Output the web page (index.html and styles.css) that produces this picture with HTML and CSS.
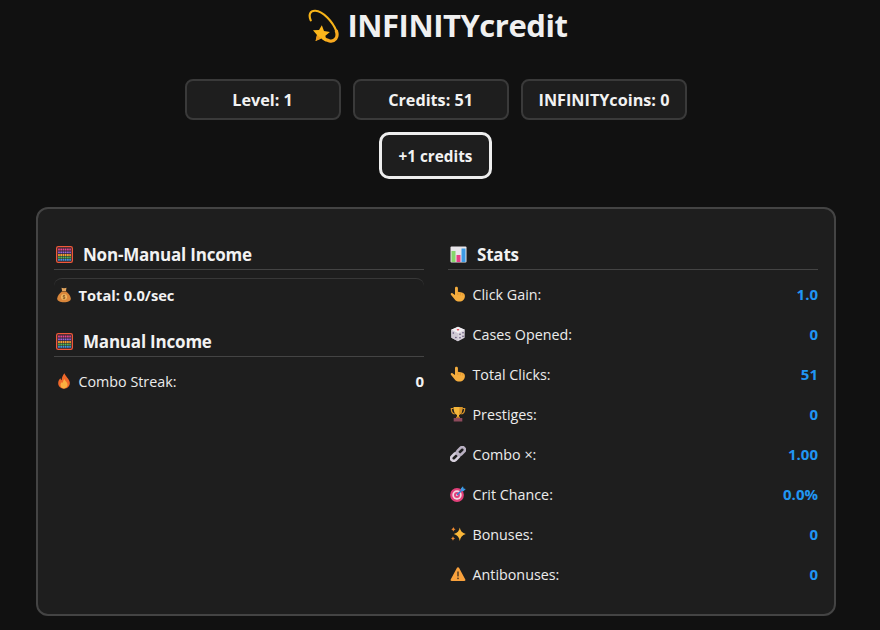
FILE: index.html
```html
<!DOCTYPE html>
<html lang="en">
<head>
<meta charset="utf-8">
<title>INFINITYcredit</title>
<link rel="stylesheet" href="styles.css">
</head>
<body>
<svg class="defs" width="0" height="0" aria-hidden="true">
  <symbol id="i-dizzy" viewBox="4.500 -.5 29 31.500">
    <path d="M6.700 10C4.500 5 6 .8 11 1.100 18 1.500 27 11 30.500 20" fill="none" stroke="#f7b419" stroke-width="2" stroke-linecap="round"/>
    <path d="M30.500 20C32.500 26 29 30 24 29 22 28.500 20.500 28 19 27" fill="none" stroke="#f8a91f" stroke-width="3" stroke-linecap="round"/>
    <path d="M17 14.500l2 5.300 5.500 1-4.200 3.500.8 5.500-4.700-2.900-5.200 2.200 1.300-5.500-3.700-4.300 5.600-.3z" fill="#fdb71b"/>
    <path d="M16.400 26.900l-5.200 2.200 1.300-5.500z" fill="#ec9a1c"/>
  </symbol>
  <symbol id="i-abacus" viewBox="0 0 16 16">
    <rect x=".6" y=".6" width="14.800" height="14.800" rx="1.500" fill="#2b2430" stroke="#f0583a" stroke-width="1.200"/>
    <path d="M2 3.300h12" stroke="#e8458f" stroke-width="1.800" stroke-dasharray="1.600 .5"/>
    <path d="M2 6h12" stroke="#9a66e0" stroke-width="1.800" stroke-dasharray="1.600 .5"/>
    <path d="M2 8.500h12" stroke="#f5a030" stroke-width="1.800" stroke-dasharray="1.600 .5"/>
    <path d="M2 10.800h12" stroke="#55bb55" stroke-width="1.800" stroke-dasharray="1.600 .5"/>
    <path d="M2 13h12" stroke="#3d9ae0" stroke-width="1.600" stroke-dasharray="1.600 .5"/>
  </symbol>
  <symbol id="i-bag" viewBox="0 0 16 16">
    <path d="M5.500 .8c1 .6 4 .6 5 0L9.800 4.500H6.200z" fill="#e0a45e"/>
    <path d="M6 4.500h4c2.500 2 4.800 4.500 4.800 7 0 2.700-2.800 3.700-6.800 3.700s-6.800-1-6.800-3.700c0-2.500 2.300-5 4.800-7z" fill="#d9863a"/>
    <rect x="5.800" y="4" width="4.400" height="1" fill="#8a5a2a"/>
    <circle cx="8" cy="10" r="3" fill="#f2b861"/>
    <path d="M9.200 8.800c-.8-.6-2.200-.5-2.200.4 0 1.200 2.200.6 2.200 1.700 0 .9-1.500 1-2.400.4M8 7.800v4.400" fill="none" stroke="#7a4a1c" stroke-width=".7"/>
  </symbol>
  <symbol id="i-fire" viewBox="0 0 16 16">
    <path d="M8.500.3c.5 3 4.700 5 5.300 9.200.4 3.700-2.700 6.200-5.800 6.200s-6-2.400-5.800-5.700c.1-2 1-3.700 2.200-4.700.2 1 .6 1.700 1.300 2C5.700 4.800 6.800 2 8.500.3z" fill="#f0682a"/>
    <path d="M8.500 6c.3 2 3 3 3 5.800 0 2.100-1.600 3.600-3.500 3.600s-3.500-1.500-3.500-3.500c0-1.500.8-2.500 1.600-3 .1.500.3.900.6 1.100C7 8.500 7.500 7 8.500 6z" fill="#fbb040"/>
  </symbol>
  <symbol id="i-chart" viewBox="0 0 17 17">
    <rect x=".5" y=".5" width="16" height="16" rx="1" fill="#e9e6ea"/>
    <rect x="1.500" y="5" width="4" height="11" fill="#86d66b"/>
    <rect x="6.500" y="9" width="4" height="7" fill="#e83f85"/>
    <rect x="11.500" y="2.500" width="4" height="13.500" fill="#3d9be6"/>
  </symbol>
  <symbol id="i-point" viewBox="0 0 16 16">
    <path d="M5 2.200C5 1.300 5.700.8 6.400.8s1.500.5 1.500 1.400v3.600l4 .8c1.700.4 3 1.500 3 3.400 0 3.300-2.300 5.600-5.500 5.600-2.300 0-3.900-.8-5-2.600L.9 8.700C.3 7.700 1.400 6.500 2.500 7.300L5 9.100z" fill="#f5ad3e"/>
    <path d="M7.900 6.500v2.600M10.300 7v2.300M12.700 7.500v2" stroke="#dc8e26" stroke-width=".7" fill="none"/>
  </symbol>
  <symbol id="i-die" viewBox="0 0 16 16">
    <path d="M8 .7l6.800 3.100-.2 8L8 15.300 1.400 11.800l-.2-8z" fill="#d9d3dc"/>
    <path d="M8 .7l6.800 3.100L8 7.200 1.200 3.800z" fill="#f1eef2"/>
    <path d="M8 7.200v8.100l-6.600-3.500-.2-8z" fill="#cfc8d3"/>
    <ellipse cx="8" cy="3.800" rx="1.300" ry=".8" fill="#e5404d"/>
    <circle cx="3.300" cy="7" r=".8" fill="#5c4d73"/><circle cx="5.900" cy="11.500" r=".8" fill="#5c4d73"/>
    <circle cx="10" cy="11.700" r=".8" fill="#5c4d73"/><circle cx="13" cy="6.800" r=".8" fill="#5c4d73"/><circle cx="13" cy="10.200" r=".8" fill="#5c4d73"/><circle cx="10" cy="8.300" r=".8" fill="#5c4d73"/>
  </symbol>
  <symbol id="i-trophy" viewBox="0 0 16 16">
    <path d="M3.500 2.500H1.300c0 3 1 5 3.500 5.500M12.500 2.500h2.200c0 3-1 5-3.500 5.500" fill="none" stroke="#d9952a" stroke-width="1.200"/>
    <path d="M3.500 1h9c0 4-1 7-3.500 8v2H7V9C4.500 8 3.500 5 3.500 1z" fill="#f5b63a"/>
    <path d="M9.500 1h3c0 4-1 7-3.500 8z" fill="#d9952a"/>
    <rect x="3.700" y="12" width="8.600" height="3.500" fill="#8e4a5c"/>
    <rect x="6" y="10.700" width="4" height="1.400" fill="#b9762a"/>
  </symbol>
  <symbol id="i-link" viewBox="0 0 16 16">
    <g fill="none" transform="rotate(-45 8 8)">
      <rect x="-.6" y="5.400" width="9" height="5.200" rx="2.600" stroke="#d6cfdc" stroke-width="2.600"/>
      <rect x="7.600" y="5.400" width="9" height="5.200" rx="2.600" stroke="#b9b0c2" stroke-width="2.600"/>
    </g>
  </symbol>
  <symbol id="i-target" viewBox="0 0 16 16">
    <circle cx="7" cy="9" r="6.900" fill="#e2407a"/>
    <circle cx="7" cy="9" r="4.700" fill="#f4d9e2"/>
    <circle cx="7" cy="9" r="3" fill="#e2407a"/>
    <circle cx="7" cy="9" r="1.100" fill="#f4d9e2"/>
    <path d="M7 9l6-6" stroke="#2f7fd6" stroke-width="1.500"/>
    <path d="M10.800 2.500L13 .2l.6 2.200 2.200.6-2.300 2.200-2.500-.5z" fill="#3d9be6"/>
  </symbol>
  <symbol id="i-spark" viewBox="0 0 16 16">
    <path d="M9.800 1.500c.5 3.400 2.500 5.500 6 6.500-3.500 1-5.500 3.100-6 7-.5-3.900-2.500-6-6-7 3.500-1 5.500-3.100 6-6.500z" fill="#fbb739"/>
    <path d="M3.400.8c.2 1.400 1.100 2.200 2.400 2.500-1.300.3-2.200 1.200-2.400 2.500C3.200 4.500 2.300 3.600 1 3.300 2.300 3 3.200 2.200 3.400.8z" fill="#f08a30"/>
    <path d="M3 10c.2 1.400 1 2.200 2.300 2.500-1.300.3-2.100 1.100-2.300 2.500-.2-1.400-1-2.200-2.300-2.500C2 12.200 2.800 11.400 3 10z" fill="#f08a30"/>
  </symbol>
  <symbol id="i-warn" viewBox="0 0 16 16">
    <path d="M8 1.200c.5 0 .8.200 1 .6l6.300 11.700c.4.700-.1 1.500-.9 1.500H1.600c-.8 0-1.300-.8-.9-1.500L7 1.800c.2-.4.500-.6 1-.6z" fill="#f9a13c"/>
    <rect x="7.300" y="5.200" width="1.400" height="5.400" rx=".7" fill="#4a3522"/>
    <circle cx="8" cy="12.300" r=".85" fill="#4a3522"/>
  </symbol>
</svg>

<header class="top">
  <h1 class="title"><svg class="title-icon"><use href="#i-dizzy"/></svg><span>INFINITYcredit</span></h1>
  <div class="chips">
    <div class="chip">Level: 1</div>
    <div class="chip">Credits: 51</div>
    <div class="chip">INFINITYcoins: 0</div>
  </div>
  <button class="click-btn" type="button">+1 credits</button>
</header>

<main class="panel">
  <section class="col">
    <h2 class="head"><span class="head-ico"><svg class="ico-lg"><use href="#i-abacus"/></svg></span>Non-Manual Income</h2>
    <div class="total"><span class="ico-box"><svg class="ico"><use href="#i-bag"/></svg></span>Total: 0.0/sec</div>
    <h2 class="head head-next"><span class="head-ico"><svg class="ico-lg"><use href="#i-abacus"/></svg></span>Manual Income</h2>
    <div class="row"><span class="label"><span class="ico-box"><svg class="ico"><use href="#i-fire"/></svg></span>Combo Streak:</span><span class="val val-white">0</span></div>
  </section>
  <section class="col">
    <h2 class="head"><span class="head-ico"><svg class="ico-lg"><use href="#i-chart"/></svg></span>Stats</h2>
    <div class="row"><span class="label"><span class="ico-box"><svg class="ico"><use href="#i-point"/></svg></span>Click Gain:</span><span class="val">1.0</span></div>
    <div class="row"><span class="label"><span class="ico-box"><svg class="ico"><use href="#i-die"/></svg></span>Cases Opened:</span><span class="val">0</span></div>
    <div class="row"><span class="label"><span class="ico-box"><svg class="ico"><use href="#i-point"/></svg></span>Total Clicks:</span><span class="val">51</span></div>
    <div class="row"><span class="label"><span class="ico-box"><svg class="ico"><use href="#i-trophy"/></svg></span>Prestiges:</span><span class="val">0</span></div>
    <div class="row"><span class="label"><span class="ico-box"><svg class="ico"><use href="#i-link"/></svg></span>Combo ×:</span><span class="val">1.00</span></div>
    <div class="row"><span class="label"><span class="ico-box"><svg class="ico"><use href="#i-target"/></svg></span>Crit Chance:</span><span class="val">0.0%</span></div>
    <div class="row"><span class="label"><span class="ico-box"><svg class="ico"><use href="#i-spark"/></svg></span>Bonuses:</span><span class="val">0</span></div>
    <div class="row"><span class="label"><span class="ico-box"><svg class="ico"><use href="#i-warn"/></svg></span>Antibonuses:</span><span class="val">0</span></div>
  </section>
</main>
</body>
</html>
```

FILE: styles.css
```css
* { box-sizing: border-box; }
html, body { height: 630px; overflow: hidden; }
body {
  margin: 0;
  padding: 0 8px 0 0;
  background: #111111;
  color: #f2f2f2;
  font-family: "Open Sans", "Noto Sans", sans-serif;
  font-size: 14.3px;
}
.defs { position: absolute; }
.top { display: flex; flex-direction: column; align-items: center; }
.title {
  display: flex;
  align-items: center;
  gap: 7px;
  margin: 7px 0 0;
  height: 37px;
  font-size: 31px;
  font-weight: 700;
  letter-spacing: -.45px;
  line-height: 37px;
  color: #f0f0f0;
}
.title-icon { width: 32px; height: 34px; margin-left: 4px; }
.chips { display: flex; gap: 12px; margin-top: 35px; }
.chip {
  min-width: 156px;
  height: 41px;
  padding: 0 16px;
  display: flex;
  align-items: center;
  justify-content: center;
  background: #1e1e1e;
  border: 2px solid #3a3a3a;
  border-radius: 8px;
  font-weight: 700;
  font-size: 16.200px;
}
.click-btn {
  margin: 12px 1px 0 0;
  padding-top: 2px;
  width: 113px;
  height: 47px;
  background: #1e1e1e;
  border: 3px solid #eeeeee;
  border-radius: 10px;
  color: #f2f2f2;
  font: 700 15.300px "Open Sans", "Noto Sans", sans-serif;
}
.panel {
  display: grid;
  grid-template-columns: 370px 370px;
  column-gap: 24px;
  width: 800px;
  height: 409px;
  margin: 28px auto 0;
  padding: 32px 16px 0;
  background: #1e1e1e;
  border: 2px solid #444444;
  border-radius: 12px;
}
.head {
  display: flex;
  align-items: center;
  height: 29px;
  margin: 0;
  padding-bottom: 1px;
  border-bottom: 1px solid #444444;
  font-size: 17px;
  font-weight: 700;
  letter-spacing: -.2px;
  color: #f2f2f2;
}
.head-next { margin-top: 15px; }
.head-ico { width: 29px; display: flex; padding-left: 2px; }
.ico-lg { width: 17px; height: 17px; }
.ico-box { width: 24.500px; display: flex; padding-left: 2px; flex: none; }
.ico { width: 16px; height: 16px; }
.total {
  display: flex;
  align-items: center;
  height: 35px;
  margin-top: 8px;
  padding-bottom: 2px;
  border-top: 1px solid #383838;
  border-radius: 8px;
  font-weight: 700;
  font-size: 14.700px;
}
.row {
  display: flex;
  justify-content: space-between;
  align-items: center;
  height: 40px;
}
.head + .row { margin-top: 4px; }
.label { display: flex; align-items: center; color: #ececec; }
.val { font-weight: 700; font-size: 15px; color: #2196f3; }
.val-white { color: #f2f2f2; }
```
